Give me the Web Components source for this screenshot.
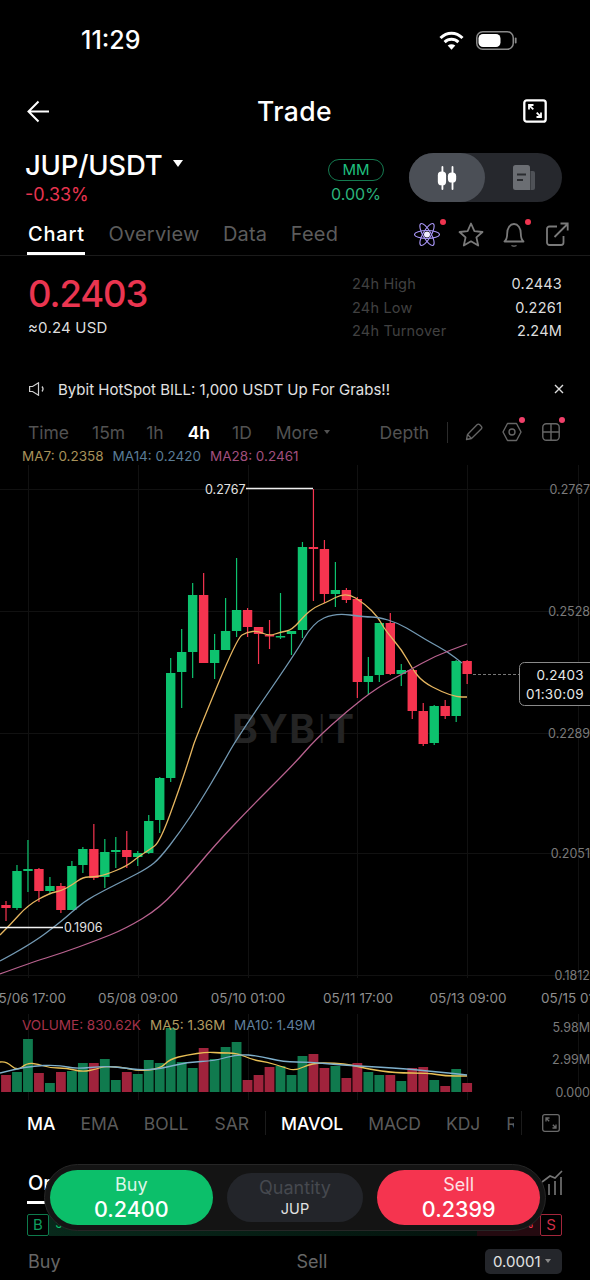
<!DOCTYPE html>
<html lang="en">
<head>
<meta charset="utf-8">
<title>Trade</title>
<style>
  html, body { margin: 0; background: #000; }
  body { width: 590px; height: 1280px; overflow: hidden; color: #fff; font-family: Inter, "Liberation Sans", sans-serif; }
</style>
</head>
<body>
  <status-bar time="11:29"></status-bar>
  <trade-header>Trade</trade-header>
  <pair-summary pair="JUP/USDT" change="-0.33%" mm="0.00%"></pair-summary>
  <chart-tabs>
    <nav-tab active>Chart</nav-tab>
    <nav-tab>Overview</nav-tab>
    <nav-tab>Data</nav-tab>
    <nav-tab>Feed</nav-tab>
  </chart-tabs>
  <price-stats price="0.2403" fiat="≈0.24 USD">
    <stat-row label="24h High">0.2443</stat-row>
    <stat-row label="24h Low">0.2261</stat-row>
    <stat-row label="24h Turnover">2.24M</stat-row>
  </price-stats>
  <notice-bar>Bybit HotSpot BILL: 1,000 USDT Up For Grabs!!</notice-bar>
  <interval-bar></interval-bar>
  <ma-legend></ma-legend>
  <kline-chart></kline-chart>
  <indicator-tabs></indicator-tabs>
  <order-panel>
    <trade-dock></trade-dock>
  </order-panel>

<script>
function shadow(el, html) {
  el.attachShadow({ mode: "open" }).innerHTML = html;
}

class StatusBar extends HTMLElement {
  constructor() {
    super();
    shadow(this, `
      <style>
        :host { display: flex; align-items: center; height: 80px; padding: 0 73px 0 81px; }
        .time { font-size: 25px; font-weight: 500; flex: 1; }
        .icons { display: flex; gap: 12px; align-items: center; }
        svg { display: block; }
      </style>
      <div class="time"></div>
      <div class="icons">
        <svg width="25" height="19" viewBox="0 0 25 19" fill="none" stroke="#fff" stroke-width="3">
          <path d="M1.5 7C8 .6 17 .6 23.5 7"/>
          <path d="M5.6 11.2C9.6 7.4 15.4 7.4 19.4 11.2"/>
          <path d="M12.5 18.8 8.7 14.6C11 12.7 14 12.7 16.3 14.6Z" fill="#fff" stroke="none"/>
        </svg>
        <svg width="41" height="19" viewBox="0 0 41 19" fill="none">
          <rect x=".75" y=".75" width="36.5" height="17.5" rx="6" stroke="#8a8a8a" stroke-width="1.5"/>
          <rect x="2.5" y="3" width="22" height="13" rx="4.5" fill="#fff"/>
          <rect x="38.8" y="6.5" width="1.8" height="6" rx=".9" fill="#8a8a8a"/>
        </svg>
      </div>`);
  }
  connectedCallback() {
    this.shadowRoot.querySelector(".time").textContent = this.getAttribute("time");
  }
}
customElements.define("status-bar", StatusBar);

class TradeHeader extends HTMLElement {
  constructor() {
    super();
    shadow(this, `
      <style>
        :host { display: grid; grid-template-columns: 1fr auto 1fr; align-items: center; height: 62px; padding: 0 43px 0 27px; }
        .title { font-size: 26.500px; font-weight: 500; letter-spacing: .4px; margin-left: 15px; }
        svg { display: block; }
        .end { justify-self: end; }
      </style>
      <svg width="23" height="23" viewBox="0 0 23 23" fill="none" stroke="#fff" stroke-width="2">
        <path d="M22 11.5H2M11.5 1.5l-10 10 10 10"/>
      </svg>
      <div class="title"><slot></slot></div>
      <svg class="end" width="24" height="24" viewBox="0 0 24 24" fill="none" stroke="#fff">
        <rect x="1.3" y="1.3" width="21.4" height="21.4" rx="2.5" stroke-width="2.3"/>
        <path d="M6 10.5V6h4.5M6.3 6.3l4 4M18 13.5V18h-4.5M17.7 17.7l-4-4" stroke-width="1.8"/>
      </svg>`);
  }
}
customElements.define("trade-header", TradeHeader);

class PairSummary extends HTMLElement {
  constructor() {
    super();
    shadow(this, `
      <style>
        :host { display: flex; height: 71px; padding: 0 28px 0 25px; box-sizing: border-box; position: relative; }
        .left { flex: 1; padding-top: 6px; }
        .pair { display: flex; align-items: center; gap: 11px; font-size: 27.500px; font-weight: 500; line-height: 34px; letter-spacing: -.2px; }
        .caret { width: 0; height: 0; border: 5.500px solid transparent; border-top: 7px solid #fff; border-bottom: 0; margin-top: -4px; }
        .change { color: #e9344f; font-size: 18px; line-height: 22px; margin-top: 2px; }
        .mm { width: 56px; margin: 17px 25px 0 0; text-align: center; display: flex; flex-direction: column; align-items: center; }
        .pill { box-sizing: border-box; width: 56px; height: 22px; border: 1px solid #157a50; border-radius: 11px; color: #1fbf7e; font-size: 15px; line-height: 20px; }
        .pct { color: #2bb47c; font-size: 16px; line-height: 20px; margin-top: 3px; }
        .switch { display: flex; width: 153px; height: 49px; margin-top: 11px; background: #26282d; border-radius: 25px; }
        .switch div { width: 76px; display: flex; align-items: center; justify-content: center; border-radius: 25px; }
        .switch .on { background: #4b4f56; }
        svg { display: block; }
      </style>
      <div class="left">
        <div class="pair"><span class="name"></span><span class="caret"></span></div>
        <div class="change"></div>
      </div>
      <div class="mm">
        <div class="pill">MM</div>
        <div class="pct"></div>
      </div>
      <div class="switch">
        <div class="on">
          <svg width="22" height="24" viewBox="0 0 24 26" fill="#fff">
            <rect x="6" y="0" width="2" height="26" rx="1"/><rect x="2" y="6" width="9" height="15" rx="4"/>
            <rect x="17" y="0" width="2" height="26" rx="1"/><rect x="13" y="7" width="9" height="11" rx="4"/>
          </svg>
        </div>
        <div>
          <svg width="22" height="25" viewBox="0 0 22 25" style="margin-left:1px">
            <path d="M2.500 0h12A2.500 2.500 0 0 1 17 2.500V25H2.500A2.500 2.500 0 0 1 0 22.500V2.500A2.500 2.500 0 0 1 2.500 0Z" fill="#6b6e73"/>
            <path d="M17.500 6H20a2 2 0 0 1 2 2v15a2 2 0 0 1-2 2h-2.500z" fill="#4f5257"/>
            <path d="M4 9.500h9M4 15h6" stroke="#2a2c30" stroke-width="2"/>
          </svg>
        </div>
      </div>`);
  }
  connectedCallback() {
    let root = this.shadowRoot;
    root.querySelector(".name").textContent = this.getAttribute("pair");
    root.querySelector(".change").textContent = this.getAttribute("change");
    root.querySelector(".pct").textContent = this.getAttribute("mm");
  }
}
customElements.define("pair-summary", PairSummary);

class NavTab extends HTMLElement {
  constructor() {
    super();
    shadow(this, `
      <style>
        :host { display: block; position: relative; font-size: 20px; line-height: 42px; color: #5c5c5c; letter-spacing: .2px; }
        :host([active]) { color: #fff; font-weight: 500; letter-spacing: .8px; }
        :host([active])::after { content: ""; position: absolute; left: -1px; right: 0; top: 39px; height: 3px; background: #fff; }
      </style>
      <slot></slot>`);
  }
}
customElements.define("nav-tab", NavTab);

class ChartTabs extends HTMLElement {
  constructor() {
    super();
    shadow(this, `
      <style>
        :host { display: flex; align-items: flex-start; box-sizing: border-box; height: 43px; padding: 0 21px 0 28px; border-bottom: 1px solid #1b1b1b; }
        .tabs { display: flex; gap: 23.500px; flex: 1; }
        .icons { display: flex; gap: 19px; padding-top: 9px; }
        .ico { position: relative; width: 24px; height: 24px; display: block; }
        .ico i { position: absolute; width: 6px; height: 6px; border-radius: 50%; background: #f0344f; right: -5px; top: -1px; }
        svg { display: block; }
      </style>
      <div class="tabs"><slot></slot></div>
      <div class="icons">
        <span class="ico" style="margin-right:2px">
          <svg width="26" height="25" viewBox="0 0 26 25" fill="none" stroke="#a795f5" stroke-width="1.100">
            <ellipse cx="13" cy="12.500" rx="12.500" ry="4" transform="rotate(60 13 12.500)"/>
            <ellipse cx="13" cy="12.500" rx="12.500" ry="4" transform="rotate(-60 13 12.500)"/>
            <ellipse cx="13" cy="12.500" rx="12.500" ry="4"/>
            <circle cx="13" cy="12.500" r="3" fill="#efeaff" stroke="none"/>
          </svg><i style="right:-8px;top:-3px"></i>
        </span>
        <span class="ico" style="margin-left:-1px;margin-right:2px">
          <svg width="26" height="25" viewBox="0 0 26 25" fill="none" stroke="#7a7a7a" stroke-width="1.800" stroke-linejoin="round">
            <path d="M13 1.500l3.400 7.700 8.100.8-6.100 5.400 1.800 8.100-7.200-4.200-7.200 4.200 1.800-8.100L1.500 10l8.100-.8z"/>
          </svg>
        </span>
        <span class="ico">
          <svg width="22" height="25" viewBox="0 0 22 25" fill="none" stroke="#7a7a7a" stroke-width="1.800" stroke-linejoin="round">
            <path d="M1.500 19.500h19c-2.200-1.800-2.700-4-2.700-8C17.800 6 15 2 11 2S4.200 6 4.200 11.500c0 4-.5 6.200-2.700 8z"/>
            <path d="M8.500 23.500c1.500.8 3.500.8 5 0" stroke-width="1.400"/>
          </svg><i style="right:-4px;top:-3px"></i>
        </span>
        <span class="ico" style="width:23px">
          <svg width="23" height="24" viewBox="0 0 23 24" fill="none" stroke="#7a7a7a" stroke-width="1.800">
            <path d="M11 4.500H3.500A2.500 2.500 0 0 0 1 7v13.500A2.500 2.500 0 0 0 3.500 23H15a2.500 2.500 0 0 0 2.500-2.500V14"/>
            <path d="M8.500 15 21.500 2M14.500 1.500h7.200v7"/>
          </svg>
        </span>
      </div>`);
  }
}
customElements.define("chart-tabs", ChartTabs);

class StatRow extends HTMLElement {
  constructor() {
    super();
    shadow(this, `
      <style>
        :host { display: flex; justify-content: space-between; font-size: 14.500px; line-height: 23.500px; color: #ddd; letter-spacing: .2px; }
        .label { color: #414141; }
      </style>
      <span class="label"></span><span><slot></slot></span>`);
  }
  connectedCallback() {
    this.shadowRoot.querySelector(".label").textContent = this.getAttribute("label");
  }
}
customElements.define("stat-row", StatRow);

class PriceStats extends HTMLElement {
  constructor() {
    super();
    shadow(this, `
      <style>
        :host { display: flex; height: 116px; box-sizing: border-box; padding: 16px 28px 0 28px; }
        .left { flex: 1; }
        .price { color: #ea3550; font-size: 36.500px; font-weight: 500; line-height: 44px; letter-spacing: -1.100px; }
        .fiat { color: #ddd; font-size: 15px; line-height: 20px; margin-top: 2px; letter-spacing: .2px; }
        .right { width: 210px; }
      </style>
      <div class="left"><div class="price"></div><div class="fiat"></div></div>
      <div class="right"><slot></slot></div>`);
  }
  connectedCallback() {
    this.shadowRoot.querySelector(".price").textContent = this.getAttribute("price");
    this.shadowRoot.querySelector(".fiat").textContent = this.getAttribute("fiat");
  }
}
customElements.define("price-stats", PriceStats);

class NoticeBar extends HTMLElement {
  constructor() {
    super();
    shadow(this, `
      <style>
        :host { display: flex; align-items: center; height: 34px; padding: 0 26px 0 29px; color: #e2e2e2; font-size: 15px; }
        .text { flex: 1; margin-left: 13px; }
        svg { display: block; }
      </style>
      <svg width="16" height="14" viewBox="0 0 16 14" fill="none" stroke="#cfcfcf" stroke-width="1.200">
        <path d="M.6 4.500h3L9.500 .8v12.400L3.600 9.500h-3z"/><path d="M13 4.500c1.300 1.500 1.300 3.500 0 5"/>
      </svg>
      <div class="text"><slot></slot></div>
      <svg width="10" height="10" viewBox="0 0 10 10" stroke="#ddd" stroke-width="1.400"><path d="M1 1l8 8M9 1l-8 8"/></svg>`);
  }
}
customElements.define("notice-bar", NoticeBar);

class IntervalBar extends HTMLElement {
  constructor() {
    super();
    shadow(this, `
      <style>
        :host { display: flex; align-items: center; box-sizing: border-box; height: 41px; padding: 11px 0 0 28px; font-size: 17.500px; color: #525252; }
        span { display: block; flex: none; }
        .caret { width: 0; height: 0; border: 3px solid transparent; border-top: 4px solid #525252; border-bottom: 0; margin-left: 5px; }
        .on { color: #fff; font-weight: 600; }
        .sep { width: 1px; height: 21px; background: #2b2b2b; margin: 0 18px; }
        .ico { position: relative; }
        .ico i { position: absolute; width: 6px; height: 6px; border-radius: 50%; background: #f0406a; right: -3px; top: -4px; }
        svg { display: block; }
      </style>
      <span>Time</span>
      <span style="margin-left:23px">15m</span>
      <span style="margin-left:21px">1h</span>
      <span style="margin-left:24px" class="on">4h</span>
      <span style="margin-left:22px">1D</span>
      <span style="margin-left:24px">More</span><span class="caret"></span>
      <span style="margin-left:50px">Depth</span>
      <span class="sep" style="margin-right:17px"></span>
      <span class="ico">
        <svg width="18" height="18" viewBox="0 0 18 18" fill="none" stroke="#666" stroke-width="1.300" stroke-linejoin="round">
          <path d="M1.500 16.500l1-5L12 1.800c.8-.8 2-.8 2.800 0l1.400 1.400c.8.8.8 2 0 2.800L6.500 15.500z"/><path d="M2.500 11.500l4 4"/>
        </svg>
      </span>
      <span class="ico" style="margin-left:19px">
        <svg width="20" height="22" viewBox="0 0 20 22" fill="none" stroke="#666" stroke-width="1.400" stroke-linejoin="round">
          <path d="M5.500 2.500h9L19 11l-4.500 8.500h-9L1 11z"/><circle cx="10" cy="11" r="3"/>
        </svg><i></i>
      </span>
      <span class="ico" style="margin-left:20px">
        <svg width="18" height="18" viewBox="0 0 18 18" fill="none" stroke="#666" stroke-width="1.400">
          <rect x=".8" y=".8" width="16.400" height="16.400" rx="3.500"/><path d="M9 .8v16.400M.8 9h16.400"/>
        </svg><i style="right:-5px;top:-6px"></i>
      </span>`);
  }
}
customElements.define("interval-bar", IntervalBar);

class MaLegend extends HTMLElement {
  constructor() {
    super();
    shadow(this, `
      <style>
        :host { display: flex; height: 18px; padding-left: 22px; gap: 9px; font-size: 13.500px; line-height: 18px; }
      </style>
      <span style="color:#a8925a">MA7: 0.2358</span>
      <span style="color:#5a7c96">MA14: 0.2420</span>
      <span style="color:#a24f7e">MA28: 0.2461</span>`);
  }
}
customElements.define("ma-legend", MaLegend);

// x of each candle is 6 + 10.98 * index; [open, close, high, low] in page y
const CANDLES = [
  [908,905,901,921,"r"],[908,871,865,910,"g"],[871,869,840,892,"g"],[869,891,868,902,"r"],
  [891,886,877,893,"g"],[886,910,883,913,"r"],[910,866,861,910,"g"],[865,849,847,873,"g"],
  [849,878,824,880,"r"],[877,852,839,888,"g"],[852,850,837,868,"g"],[850,857,831,868,"r"],
  [857,853,851,866,"g"],[853,821,815,854,"g"],[820,778,777,833,"g"],[778,673,658,782,"g"],
  [672,652,629,708,"g"],[652,595,583,678,"g"],[595,663,573,663,"r"],[663,650,634,679,"g"],
  [650,631,598,650,"g"],[631,610,558,637,"g"],[610,627,608,637,"r"],[627,634,627,664,"r"],
  [635,636,620,649,"r"],[637,636,593,639,"g"],[634,631,631,655,"g"],[630,547,542,638,"g"],
  [547,549,489,601,"r"],[549,594,540,603,"r"],[594,590,562,607,"g"],[590,600,588,603,"r"],
  [599,682,597,698,"r"],[682,676,657,695,"g"],[675,623,623,682,"g"],[623,674,613,675,"r"],
  [674,670,664,686,"g"],[670,711,670,719,"r"],[711,744,703,746,"r"],[743,706,705,745,"g"],
  [706,716,700,719,"r"],[716,661,660,722,"g"],[661,674,660,684,"r"]
];
const VOLUMES = [
  1075,1072,1039,1073,1083,1072,1071,1063,1063,1059,1080,1072,1074,1060,1063,1028,1062,1068,
  1048,1059,1047,1042,1080,1075,1067,1066,1075,1056,1054,1068,1066,1078,1063,1072,1075,1075,
  1081,1068,1067,1080,1086,1069,1083
];
const MA7 = "0,935 10,925 28,905 50,893 61,891 72,885 83,877 94,877 105,875 127,866 138,857 149,850 160,842 180,787 192,750 195,740 237,638 247,632 258,631 269,636 281,632 292,630 305,615 315,607 325,603 346,592 365,604 378,617 385,630 402,650 413,670 423,682 442,692 457,697 467,697";
const MA14 = "0,961 30,945 62,921 83,902 105,890 125,880 148,868 160,858 180,832 200,802 222,765 237,738 295,654 313,623 335,613 365,617 378,617 398,623 415,633 428,641 448,652 462,663";
const MA28 = "0,974 30,963 62,953 95,941 125,929 160,908 190,875 215,845 250,808 295,763 315,740 347,711 378,687 408,671 435,656 467,644";
const VOL_MA5 = "0,1062 6,1061 17,1071 27,1063 38,1064 50,1068 67,1068 82,1072 97,1069 105,1066 127,1068 137,1071 160,1069 170,1059 187,1055 207,1052 220,1053 237,1053 253,1060 267,1062 283,1067 295,1071 312,1063 335,1063 352,1065 368,1069 395,1073 428,1073 445,1076 467,1076";
const VOL_MA10 = "0,1073 27,1066 60,1065 75,1069 105,1066 125,1068 140,1070 160,1069 187,1062 215,1061 237,1054 260,1056 283,1062 310,1062 340,1065 395,1068 430,1071 467,1075";

// rounds the corners of a line by curving through the midpoints
function smooth(points) {
  let p = points.split(" ").map(s => s.split(",").map(Number));
  let d = `M${p[0][0]} ${p[0][1]}`;
  for (let i = 1; i < p.length - 1; i++) {
    let mx = (p[i][0] + p[i + 1][0]) / 2;
    let my = (p[i][1] + p[i + 1][1]) / 2;
    d += `Q${p[i][0]} ${p[i][1]} ${mx} ${my}`;
  }
  let last = p[p.length - 1];
  return d + `L${last[0]} ${last[1]}`;
}

class KlineChart extends HTMLElement {
  constructor() {
    super();
    let candleMarks = "";
    let volumeMarks = "";
    CANDLES.forEach((c, i) => {
      let x = 6 + 10.98 * i;
      let colour = c[4] == "g" ? "#0dc26e" : "#f5344f";
      let top = Math.min(c[0], c[1]);
      let h = Math.max(Math.abs(c[0] - c[1]), 1.5);
      candleMarks += `<rect x="${x - .6}" y="${c[2]}" width="1.2" height="${c[3] - c[2]}" fill="${colour}"/>`;
      candleMarks += `<rect x="${x - 4.7}" y="${top}" width="9.4" height="${h}" fill="${colour}"/>`;
      let barColour = c[4] == "g" ? "#107a4e" : "#a0233c";
      volumeMarks += `<rect x="${x - 4.9}" y="${VOLUMES[i]}" width="9.800" height="${1092 - VOLUMES[i]}" fill="${barColour}"/>`;
    });
    let grid = "";
    [28, 138, 248, 357, 467, 578].forEach(x => { grid += `<path d="M${x}.5 465V978M${x}.5 1014V1100"/>`; });
    [489, 611, 733, 853, 975].forEach(y => { grid += `<path d="M0 ${y}.5H590"/>`; });
    let prices = [["0.2767", 489], ["0.2528", 611], ["0.2289", 733], ["0.2051", 853], ["0.1812", 975]];
    let priceText = prices.map(p => `<text x="590" y="${p[1] + 4.500}" text-anchor="end">${p[0]}</text>`).join("");
    let dates = [["05/06 17:00", 28], ["05/08 09:00", 138], ["05/10 01:00", 248], ["05/11 17:00", 358], ["05/13 09:00", 468], ["05/15 01:00", 578]];
    let dateText = dates.map(d => `<text x="${d[1]}" y="1003" text-anchor="middle">${d[0]}</text>`).join("");

    shadow(this, `
      <style>
        :host { display: block; height: 640px; }
        svg { display: block; }
        text { font-family: Inter, "Liberation Sans", sans-serif; }
        .axis { font-size: 12.500px; fill: #7a7a7a; }
        .date { font-size: 13.500px; fill: #8e8e8e; }
        .mark { font-size: 12.500px; fill: #e2e2e2; }
        .tag { font-size: 13.500px; fill: #e8e8e8; letter-spacing: .3px; }
        .wm { font-size: 39px; font-weight: 700; fill: #242424; letter-spacing: 1.500px; }
        .thin { font-weight: 200; }
        .ma { fill: none; stroke-width: 1.300; stroke-linejoin: round; }
        .legend { font-size: 13.500px; }
      </style>
      <svg width="590" height="640" viewBox="0 465 590 640">
        <g stroke="#111" stroke-width="1" fill="none">${grid}</g>
        <text class="wm" x="232" y="743">BYB<tspan class="thin">I</tspan>T</text>
        ${candleMarks}
        <path class="ma" stroke="#e6b660" d="${smooth(MA7)}"/>
        <path class="ma" stroke="#7399b3" d="${smooth(MA14)}"/>
        <path class="ma" stroke="#b9628f" d="${smooth(MA28)}"/>
        <path d="M246 488.500H313" stroke="#eee" stroke-width="1.600"/>
        <text class="mark" x="205" y="494">0.2767</text>
        <path d="M0 927.500H63" stroke="#f2f2f2" stroke-width="1.600"/>
        <text class="mark" x="64" y="932">0.1906</text>
        <g class="axis">${priceText}</g>
        <g class="date">${dateText}</g>
        <path d="M473 674.500H519" stroke="#777" stroke-dasharray="3 2"/>
        <rect x="519.500" y="662.500" width="80" height="43" rx="5" fill="#000" stroke="#8a8a8a"/>
        <text class="tag" x="584" y="680" text-anchor="end">0.2403</text>
        <text class="tag" x="584" y="699" text-anchor="end">01:30:09</text>
        ${volumeMarks}
        <path class="ma" stroke="#e8bf55" d="${smooth(VOL_MA5)}"/>
        <path class="ma" stroke="#7fb0cc" d="${smooth(VOL_MA10)}"/>
        <text class="legend" x="22" y="1030" fill="#a5324a">VOLUME: 830.62K</text>
        <text class="legend" x="150" y="1030" fill="#b09a60">MA5: 1.36M</text>
        <text class="legend" x="234" y="1030" fill="#5f7f9c">MA10: 1.49M</text>
        <text class="axis" x="590" y="1032" text-anchor="end">5.98M</text>
        <text class="axis" x="590" y="1064" text-anchor="end">2.99M</text>
        <text class="axis" x="590" y="1097" text-anchor="end">0.000</text>
      </svg>`);
  }
}
customElements.define("kline-chart", KlineChart);

class IndicatorTabs extends HTMLElement {
  constructor() {
    super();
    shadow(this, `
      <style>
        :host { display: flex; align-items: center; height: 36px; padding-left: 27px; font-size: 17.500px; color: #5b5b5b; }
        span { display: block; white-space: nowrap; flex: none; }
        .on { color: #fff; font-weight: 500; }
        .sep { width: 1px; height: 24px; background: #1b1b1b; }
        .cut { width: 8px; overflow: hidden; margin-left: 26px; }
        svg { display: block; margin-left: 20px; flex: none; }
      </style>
      <span class="on">MA</span>
      <span style="margin-left:25px">EMA</span>
      <span style="margin-left:25px">BOLL</span>
      <span style="margin-left:26px">SAR</span>
      <span class="sep" style="margin-left:16px"></span>
      <span class="on" style="margin-left:15px">MAVOL</span>
      <span style="margin-left:25px">MACD</span>
      <span style="margin-left:25px">KDJ</span>
      <span class="cut">R</span>
      <span class="sep" style="margin-left:7px"></span>
      <svg width="18" height="18" viewBox="0 0 18 18" fill="none" stroke="#6a6a6a" stroke-width="1.300">
        <rect x=".7" y=".7" width="16.600" height="16.600" rx="2"/>
        <path d="M4 7.500V4h3.500M4.200 4.200l3 3M14 10.500V14h-3.500M13.800 13.800l-3-3"/>
      </svg>`);
  }
}
customElements.define("indicator-tabs", IndicatorTabs);

class OrderPanel extends HTMLElement {
  constructor() {
    super();
    shadow(this, `
      <style>
        :host { display: block; position: relative; height: 139px; overflow: hidden; padding: 0 28px; }
        .tab { display: flex; justify-content: space-between; height: 73px; position: relative; }
        .title { color: #fff; font-size: 20px; font-weight: 500; line-height: 24px; margin-top: 30px; }
        .title::after { content: ""; display: block; width: 18px; height: 3px; margin: 6px 0 0 -1px; background: #fff; }
        .tab svg { display: block; margin: 29px -1px 0 0; }
        .ratio { display: flex; height: 22px; margin: 0 0 0 -1px; font-size: 13px; line-height: 18px; }
        .badge { box-sizing: border-box; width: 22px; height: 22px; border-radius: 2px; text-align: center; font-size: 15px; line-height: 20px; flex: none; }
        .buy { color: #0e9c5e; border: 1px solid #0e7a4c; }
        .sell { color: #d12e46; border: 1px solid #a3263b; }
        .bar { display: flex; flex: 1; }
        .b { flex: 432; color: #0dc26e; padding-left: 6px; background: linear-gradient(90deg, #08291b, #03120c); }
        .s { flex: 58; color: #f5344f; text-align: right; padding-right: 6px; background: #240a10; }
        .foot { display: flex; align-items: center; height: 25px; margin-top: 13px; color: #666; font-size: 18px; }
        .sell-label { flex: 1; margin-left: 236px; }
        .step { box-sizing: border-box; display: flex; align-items: center; height: 25px; width: 77px; padding-left: 8px; background: #24262b; border-radius: 5px; color: #e2e2e2; font-size: 15px; }
        .step i { width: 0; height: 0; border: 3px solid transparent; border-top: 4px solid #888; border-bottom: 0; margin: 0 0 1px 4px; }
      </style>
      <div class="tab">
        <div class="title">Or</div>
        <svg width="22" height="26" viewBox="0 0 22 26" fill="none" stroke="#777" stroke-width="1.600">
          <path d="M2 25V17M8 25V14M14 25V11M20 25V7M1 12 9 6l5 2 7-7"/>
        </svg>
      </div>
      <div class="ratio">
        <span class="badge buy">B</span>
        <div class="bar"><span class="b">51.10%</span><span class="s">48.90%</span></div>
        <span class="badge sell">S</span>
      </div>
      <div class="foot">
        <span>Buy</span><span class="sell-label">Sell</span>
        <span class="step">0.0001<i></i></span>
      </div>
      <slot></slot>`);
  }
}
customElements.define("order-panel", OrderPanel);

class TradeDock extends HTMLElement {
  constructor() {
    super();
    shadow(this, `
      <style>
        :host { position: absolute; left: 44px; top: 23px; box-sizing: border-box; width: 502px; height: 67px; display: flex; align-items: center; justify-content: space-between; padding: 0 5px; background: #141414; border: 1px solid #262626; border-radius: 34px; }
        .side { width: 163px; height: 55px; border-radius: 28px; color: #fff; text-align: center; }
        .buy { background: #0cbf6a; margin-right: 14px; }
        .sell { background: #f5344f; margin-left: 14px; }
        .side div { font-size: 18px; line-height: 22px; padding-top: 4px; opacity: .85; }
        .side b { display: block; font-size: 21.500px; line-height: 27px; font-weight: 500; }
        .qty { width: 137px; height: 49px; border-radius: 25px; background: #23252a; text-align: center; }
        .qty div { color: #46494f; font-size: 18px; line-height: 22px; padding-top: 4px; }
        .qty span { display: block; color: #e2e2e2; font-size: 14.500px; line-height: 20px; }
      </style>
      <div class="side buy"><div>Buy</div><b>0.2400</b></div>
      <div class="qty"><div>Quantity</div><span>JUP</span></div>
      <div class="side sell"><div>Sell</div><b>0.2399</b></div>`);
  }
}
customElements.define("trade-dock", TradeDock);
</script>
</body>
</html>
